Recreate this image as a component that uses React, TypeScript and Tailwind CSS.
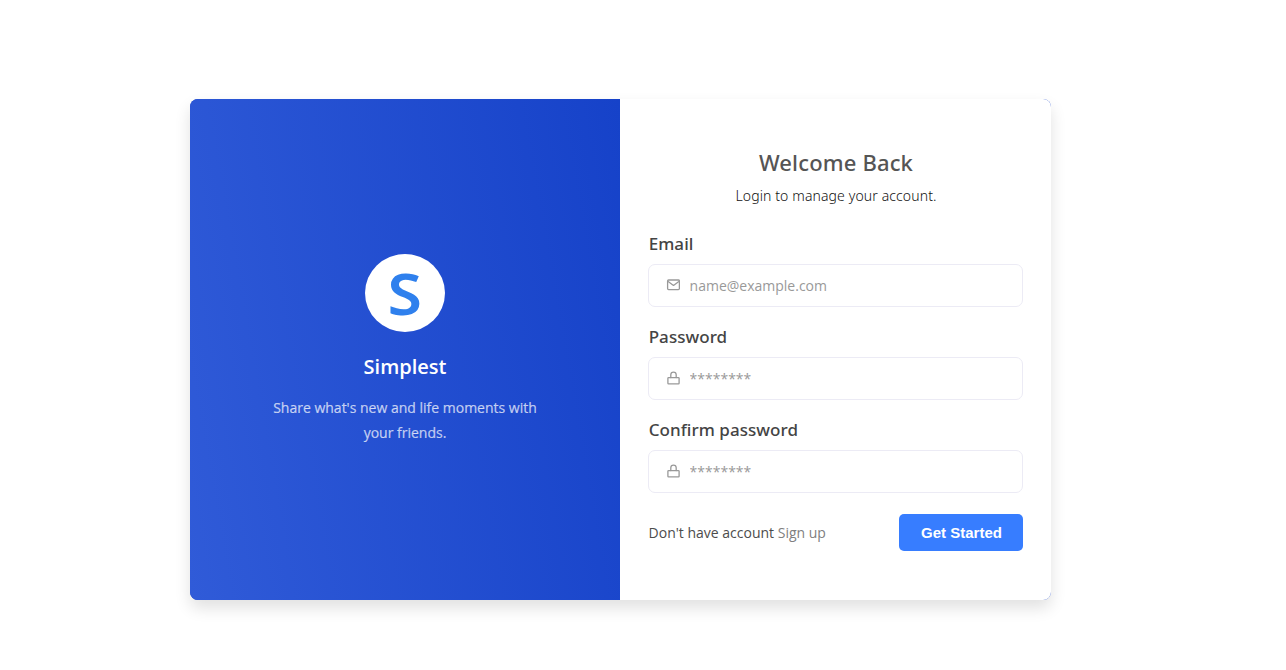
type FieldProps = {
  id: string;
  label: string;
  type: string;
  placeholder: string;
  icon: "mail" | "lock";
};

function FieldIcon({ name }: { name: "mail" | "lock" }) {
  return (
    <svg viewBox="0 0 14 14" className="mr-[8px] size-[14px] shrink-0 -translate-y-px fill-none stroke-[#999]" strokeWidth="1.3" strokeLinejoin="round" strokeLinecap="round" aria-hidden="true">
      {name === "mail" ? (
        <>
          <rect x="1.6" y="2" width="11.8" height="9.6" rx="1" />
          <path d="M2.5 3.7 7.5 7.4 12.5 3.7" />
        </>
      ) : (
        <>
          <rect x="1.9" y="6.6" width="11.2" height="6.3" rx="0.7" />
          <path d="M4.8 6.5V3.8a2.7 2.7 0 0 1 5.4 0v2.7" />
        </>
      )}
    </svg>
  );
}

function Field({ id, label, type, placeholder, icon }: FieldProps) {
  return (
    <div className="h-[93px]">
      <label htmlFor={id} className="block h-[32px] pl-[0.7px] font-['Noto_Sans',sans-serif] text-[17px] leading-[23px] font-medium tracking-[0.05px] text-[#444]">
        {label}
      </label>
      <div className="flex h-[43px] items-center rounded-[7px] border border-[#ecebf5] bg-white pr-4 pl-[17px]">
        <FieldIcon name={icon} />
        <input
          id={id}
          type={type}
          placeholder={placeholder}
          className="ml-[1.6px] min-w-0 flex-1 bg-transparent text-[14px] leading-5 text-[#444] outline-none placeholder:text-[#999]"
        />
      </div>
    </div>
  );
}

export default function App() {
  return (
    <main className="min-h-[670px] bg-white pt-[99px] pl-[190px] font-['Open_Sans',sans-serif]">
      <div className="flex h-[501px] w-[861px] overflow-hidden rounded-[8px] bg-[#1b46cb] shadow-[0_8px_16px_rgba(0,0,0,0.12)]">
        <section className="flex w-[430px] flex-col items-center bg-[linear-gradient(80deg,#305bd8,#1642c9)] pt-[155px] text-center">
          <div className="flex h-[78px] w-[80px] items-center justify-center rounded-[50%] bg-white">
            <span className="scale-x-110 font-['Noto_Sans',sans-serif] text-[57px] leading-[78px] font-semibold text-[#2f80ed]">S</span>
          </div>
          <h1 className="mt-[21px] text-[20px] leading-7 font-semibold text-white">Simplest</h1>
          <p className="mt-[14px] w-[280px] text-[14px] leading-[25px] text-white/70 [-webkit-text-stroke:0.2px]">
            Share what's new and life moments with your friends.
          </p>
        </section>
        <section className="flex-1 bg-white px-[28px] pt-[47px]">
          <h2 className="pl-px text-center font-['Noto_Sans',sans-serif] text-[22px] leading-8 font-medium tracking-[0.15px] text-[#555]">Welcome Back</h2>
          <p className="mt-[8px] pl-px text-center font-['Noto_Sans',sans-serif] text-[14px] leading-5 font-light tracking-[0.12px] text-[#111]">Login to manage your account.</p>
          <form className="mt-[26px]" onSubmit={(event) => event.preventDefault()}>
            <Field id="email" label="Email" type="email" placeholder="name@example.com" icon="mail" />
            <Field id="password" label="Password" type="password" placeholder="********" icon="lock" />
            <Field id="confirm" label="Confirm password" type="password" placeholder="********" icon="lock" />
            <div className="mt-[3px] flex h-[37px] items-center justify-between">
              <p className="pl-[0.6px] text-[14px] leading-5 text-[#4c4c4c]">
                Don't have account <a href="#" className="text-[#808080]">Sign up</a>
              </p>
              <button className="h-[37px] w-[124px] rounded-[5px] bg-[#377dff] pt-[2px] pl-px font-['Liberation_Sans',sans-serif] text-[15px] font-bold text-white">
                Get Started
              </button>
            </div>
          </form>
        </section>
      </div>
    </main>
  );
}
